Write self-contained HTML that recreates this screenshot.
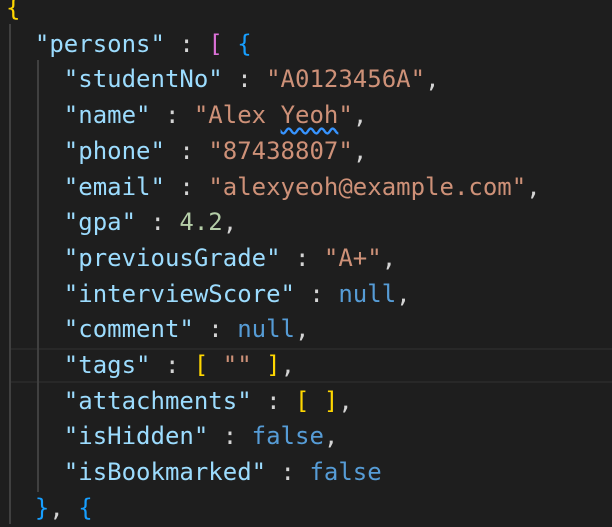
<!DOCTYPE html>
<html><head><meta charset="utf-8"><style>
html,body{margin:0;padding:0;background:#1e1e1e;width:612px;height:524px;overflow:hidden}
.c{position:absolute;left:6px;top:-9px;font-family:"DejaVu Sans Mono","Liberation Mono",monospace;font-size:24px;line-height:35.7px;color:#d4d4d4;white-space:pre}
.k{color:#9cdcfe}.s{color:#ce9178}.n{color:#b5cea8}.b{color:#569cd6}
.y{color:#ffd700}.p{color:#da70d6}.bl{color:#179fff}
.g{position:absolute;width:2px;background:#404040}
.hl{position:absolute;left:10px;right:0;top:348px;height:31px;border-top:2px solid #282828;border-bottom:2px solid #282828}
.sq{text-decoration:underline wavy #3794ff;text-underline-offset:4px}
</style></head><body>
<div class="hl"></div>
<div class="g" style="left:9px;top:24px;height:500px"></div>
<div class="g" style="left:37px;top:60px;height:432px"></div>
<div class="c"><span class="y">{</span>
  <span class="k">"persons"</span> : <span class="p">[</span> <span class="bl">{</span>
    <span class="k">"studentNo"</span> : <span class="s">"A0123456A"</span>,
    <span class="k">"name"</span> : <span class="s">"Alex <span class="sq">Yeoh</span>"</span>,
    <span class="k">"phone"</span> : <span class="s">"87438807"</span>,
    <span class="k">"email"</span> : <span class="s">"alexyeoh@example.com"</span>,
    <span class="k">"gpa"</span> : <span class="n">4.2</span>,
    <span class="k">"previousGrade"</span> : <span class="s">"A+"</span>,
    <span class="k">"interviewScore"</span> : <span class="b">null</span>,
    <span class="k">"comment"</span> : <span class="b">null</span>,
    <span class="k">"tags"</span> : <span class="y">[</span> <span class="s">""</span> <span class="y">]</span>,
    <span class="k">"attachments"</span> : <span class="y">[</span> <span class="y">]</span>,
    <span class="k">"isHidden"</span> : <span class="b">false</span>,
    <span class="k">"isBookmarked"</span> : <span class="b">false</span>
  <span class="bl">}</span>, <span class="bl">{</span></div>
</body></html>
